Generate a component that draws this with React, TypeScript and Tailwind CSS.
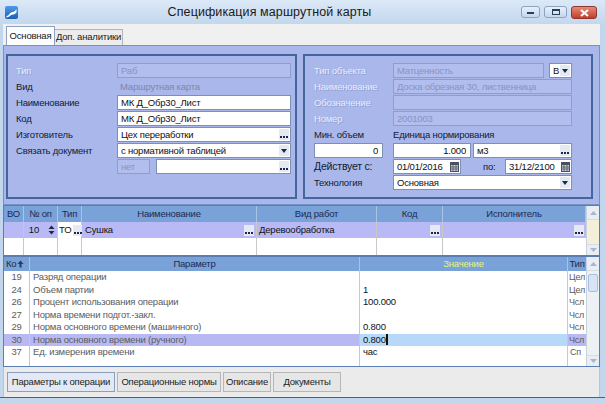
import React from "react";

function Dots() {
  return (
    <svg width="10" height="11" viewBox="0 0 10 11" className="shrink-0">
      <rect x="0" y="0" width="10" height="11" fill="#e6e9f2" />
      <rect x="1" y="7" width="2" height="2" fill="#1c2848" />
      <rect x="4" y="7" width="2" height="2" fill="#1c2848" />
      <rect x="7" y="7" width="2" height="2" fill="#1c2848" />
    </svg>
  );
}

function Drop() {
  return (
    <svg width="10" height="11" viewBox="0 0 10 11" className="shrink-0">
      <rect x="0" y="0" width="10" height="11" fill="#e6e9f2" />
      <path d="M2 4 L8 4 L5 8 Z" fill="#1c2848" />
    </svg>
  );
}

function Cal() {
  return (
    <svg width="9" height="10" viewBox="0 0 9 10" className="shrink-0">
      <rect x="0.5" y="0.5" width="8" height="9" fill="#c8ccd6" stroke="#4a5060" />
      <rect x="1" y="1" width="7" height="2" fill="#4a5060" />
      <path d="M1 5 H8 M1 7 H8 M3 3 V9 M6 3 V9" stroke="#4a5060" strokeWidth="0.8" />
    </svg>
  );
}

function Spin() {
  return (
    <svg width="7" height="10" viewBox="0 0 7 10" className="shrink-0">
      <path d="M3.5 0.5 L6.5 4 L0.5 4 Z" fill="#1c2848" />
      <path d="M3.5 9.5 L6.5 6 L0.5 6 Z" fill="#1c2848" />
    </svg>
  );
}

function Inp({
  cls,
  text = "",
  dis = false,
  right = false,
  btn,
}: {
  cls: string;
  text?: string;
  dis?: boolean;
  right?: boolean;
  btn?: "dots" | "drop" | "cal";
}) {
  const base = dis
    ? "bg-[#b2beee] border-[#8d9dcf] text-[#8793c2]"
    : "bg-white border-[#7d8fb6] text-[#101010]";
  return (
    <div className={`h-[15px] border ${base} flex items-center pl-[3px] pr-[1px] shrink-0 ${cls}`}>
      <span className={`flex-1 whitespace-nowrap overflow-hidden leading-[13px] ${right ? "text-right pr-[3px]" : ""}`}>
        {text}
      </span>
      {btn === "dots" && <Dots />}
      {btn === "drop" && <Drop />}
      {btn === "cal" && <Cal />}
    </div>
  );
}

function DisLabel({ children, cls }: { children: React.ReactNode; cls: string }) {
  return (
    <div className={`shrink-0 leading-[15px] text-[#e8ecfb] [text-shadow:1px_1px_0_#93a2d6] ${cls}`}>{children}</div>
  );
}

function Label({ children, cls }: { children: React.ReactNode; cls: string }) {
  return <div className={`shrink-0 leading-[15px] text-[#121a30] whitespace-nowrap ${cls}`}>{children}</div>;
}

function TitleBar() {
  return (
    <div className="h-[24px] shrink-0 flex items-center bg-gradient-to-b from-[#dce9f7] to-[#c3d7ee]">
      <div className="ml-[5px] w-[13px] h-[13px]">
        <svg width="13" height="13" viewBox="0 0 13 13">
          <defs>
            <linearGradient id="ig" x1="0" y1="0" x2="0" y2="1">
              <stop offset="0" stopColor="#4f9be8" />
              <stop offset="1" stopColor="#1c5fb4" />
            </linearGradient>
          </defs>
          <rect x="0" y="0" width="13" height="13" rx="2" fill="url(#ig)" />
          <path d="M1.5 10 C4 10 5 6 7.5 6 C9.5 6 10 5 11.5 3 L11.5 6.5 C10 8 9 8.5 7.5 8.5 C5.5 8.5 4.5 11.5 1.5 11.5 Z" fill="#ffffff" />
        </svg>
      </div>
      <div className="flex-1 text-center text-[12.5px] tracking-[0.1px] text-[#1a1a1a] leading-[24px]">Спецификация маршрутной карты</div>
      <div className="flex items-start gap-[4px] mr-[8px] mt-[2px] h-[14px]">
        <div className="w-[19px] h-[12px] rounded-[3px] border border-[#8aa3c3] bg-gradient-to-b from-[#e9f1fa] to-[#c5d7ec] flex items-end justify-center pb-[3px]">
          <div className="w-[7px] h-[2px] bg-[#2a3c58]" />
        </div>
        <div className="w-[23px] h-[12px] rounded-[3px] border border-[#8aa3c3] bg-gradient-to-b from-[#e9f1fa] to-[#c5d7ec] flex items-center justify-center">
          <div className="w-[8px] h-[6px] border border-[#2a3c58] border-t-2" />
        </div>
        <div className="w-[26px] h-[13px] rounded-[3px] border border-[#8a3a2e] bg-gradient-to-b from-[#e58a78] to-[#c23c28] flex items-center justify-center">
          <svg width="9" height="8" viewBox="0 0 9 8">
            <path d="M1 1 L8 7 M8 1 L1 7" stroke="#ffffff" strokeWidth="2" />
          </svg>
        </div>
      </div>
    </div>
  );
}

function TopTabs() {
  return (
    <div className="h-[21px] shrink-0 bg-[#f0f0f0] flex items-end pl-[3px] whitespace-nowrap">
      <div className="h-[19px] w-[49px] bg-[#fbfcfe] border border-b-0 border-[#8ea3c2] flex items-center justify-center text-[#1a1a1a]">
        Основная
      </div>
      <div className="h-[16px] w-[68px] bg-[#ececec] border border-b-0 border-l-0 border-[#b4b4b4] flex items-center justify-center text-[#1a1a1a]">
        Доп. аналитики
      </div>
    </div>
  );
}

function LeftGroup() {
  return (
    <div className="w-[291px] h-[145px] border-2 border-[#45669d] pt-[7px] pl-[8px] pr-[4px] flex flex-col">
      <div className="h-[16px] flex">
        <DisLabel cls="w-[101px]">Тип</DisLabel>
        <Inp cls="w-[174px]" dis text="Раб" />
      </div>
      <div className="h-[16px] flex">
        <Label cls="w-[104px]">Вид</Label>
        <div className="leading-[15px] text-[#7e88ae]">Маршрутная карта</div>
      </div>
      <div className="h-[16px] flex">
        <Label cls="w-[101px]">Наименование</Label>
        <Inp cls="w-[174px]" text="МК Д_Обр30_Лист" />
      </div>
      <div className="h-[16px] flex">
        <Label cls="w-[101px]">Код</Label>
        <Inp cls="w-[174px]" text="МК Д_Обр30_Лист" />
      </div>
      <div className="h-[16px] flex">
        <Label cls="w-[101px]">Изготовитель</Label>
        <Inp cls="w-[174px]" text="Цех переработки" btn="dots" />
      </div>
      <div className="h-[16px] flex">
        <Label cls="w-[101px]">Связать документ</Label>
        <Inp cls="w-[174px]" text="с нормативной таблицей" btn="drop" />
      </div>
      <div className="h-[16px] flex">
        <div className="w-[101px] shrink-0" />
        <Inp cls="w-[33px]" dis text="нет" />
        <div className="w-[6px] shrink-0" />
        <Inp cls="w-[135px]" btn="dots" />
      </div>
    </div>
  );
}

function RightGroup() {
  return (
    <div className="w-[290px] h-[145px] border-2 border-[#45669d] pt-[7px] pl-[9px] flex flex-col">
      <div className="h-[16px] flex">
        <DisLabel cls="w-[79px]">Тип объекта</DisLabel>
        <Inp cls="w-[151px]" dis text="Матценность" />
        <div className="w-[5px] shrink-0" />
        <div className="w-[23px] h-[15px] border border-[#7d8fb6] bg-white flex items-center pl-[3px] pr-[1px] text-[#101010] leading-[13px]">
          <span className="flex-1">B</span>
          <Drop />
        </div>
      </div>
      <div className="h-[16px] flex">
        <DisLabel cls="w-[79px]">Наименование</DisLabel>
        <Inp cls="w-[179px]" dis text="Доска обрезная 30, лиственница" />
      </div>
      <div className="h-[16px] flex">
        <DisLabel cls="w-[79px]">Обозначение</DisLabel>
        <Inp cls="w-[179px]" dis />
      </div>
      <div className="h-[16px] flex">
        <DisLabel cls="w-[79px]">Номер</DisLabel>
        <Inp cls="w-[179px]" dis text="2001003" />
      </div>
      <div className="h-[16px] flex">
        <Label cls="w-[79px]">Мин. объем</Label>
        <Label cls="">Единица нормирования</Label>
      </div>
      <div className="h-[16px] flex">
        <Inp cls="w-[69px]" right text="0" />
        <div className="w-[10px] shrink-0" />
        <Inp cls="w-[78px]" right text="1.000" />
        <div className="w-[2px] shrink-0" />
        <Inp cls="w-[99px]" text="м3" btn="dots" />
      </div>
      <div className="h-[16px] flex">
        <Label cls="w-[79px] text-[10.5px]">Действует с:</Label>
        <Inp cls="w-[68px]" text="01/01/2016" btn="cal" />
        <Label cls="w-[44px] pl-[22px]">по:</Label>
        <Inp cls="w-[67px]" text="31/12/2100" btn="cal" />
      </div>
      <div className="h-[16px] flex">
        <Label cls="w-[79px]">Технология</Label>
        <Inp cls="w-[179px]" text="Основная" btn="drop" />
      </div>
    </div>
  );
}

function MainPanel() {
  return (
    <div className="h-[160px] shrink-0 bg-[#a9b7eb] border border-[#7592c6] pt-[8px] pl-[2px] flex gap-[6px]">
      <LeftGroup />
      <RightGroup />
    </div>
  );
}

function ScrollBar({ track, thumb }: { track: string; thumb?: boolean }) {
  return (
    <div className="w-[13px] shrink-0 flex flex-col border-l border-[#c8d2de]">
      <div className="h-[14px] bg-[#e9eef5] flex items-center justify-center border-b border-[#d4dce6]">
        <svg width="7" height="4" viewBox="0 0 7 4">
          <path d="M0 4 L3.5 0 L7 4 Z" fill="#a7b6ca" />
        </svg>
      </div>
      <div className={`flex-1 ${track} flex flex-col`}>
        {thumb && <div className="h-[18px] mt-[3px] mx-[1px] rounded-[2px] bg-[#d6e4f5] border border-[#a9c0dc]" />}
      </div>
      <div className="h-[11px] bg-[#e9eef5] flex items-center justify-center border-t border-[#d4dce6]">
        <svg width="7" height="4" viewBox="0 0 7 4">
          <path d="M0 0 L3.5 4 L7 0 Z" fill="#a7b6ca" />
        </svg>
      </div>
    </div>
  );
}

const OPS_W = ["w-[20px]", "w-[34px]", "w-[24px]", "w-[175px]", "w-[120px]", "w-[66px]", "w-[143px]"];

function OpsGrid() {
  const heads = ["ВО", "№ оп", "Тип", "Наименование", "Вид работ", "Код", "Исполнитель"];
  return (
    <div className="h-[51px] shrink-0 border border-[#5b7db2] bg-white flex">
      <div className="flex flex-col w-[582px]">
        <div className="h-[16px] flex bg-[#79a2d8] text-[#1b2b52]">
          {heads.map((h, i) => (
            <div key={h} className={`${OPS_W[i]} shrink-0 h-full border-r border-[#a9c3e6] flex items-center justify-center leading-[16px] whitespace-nowrap`}>
              {h}
            </div>
          ))}
        </div>
        <div className="h-[16px] flex text-[#111]">
          <div className="w-[20px] shrink-0 bg-[#b9b9f6] border-r border-[#c8c8c8]" />
          <div className="w-[34px] shrink-0 bg-[#b9b9f6] border-r border-[#c8c8c8] flex items-center justify-end pr-[2px] gap-[9px]">
            <span>10</span>
            <Spin />
          </div>
          <div className="w-[24px] shrink-0 bg-white border-r border-[#c8c8c8] flex items-center pl-[1px] gap-[2px]">
            <span>ТО</span>
            <Dots />
          </div>
          <div className="w-[175px] shrink-0 bg-[#b9b9f6] border-r border-[#c8c8c8] flex items-center pl-[3px] pr-[2px]">
            <span className="flex-1">Сушка</span>
            <Dots />
          </div>
          <div className="w-[120px] shrink-0 bg-[#b9b9f6] border-r border-[#c8c8c8] flex items-center pl-[2px]">
            Деревообработка
          </div>
          <div className="w-[66px] shrink-0 bg-[#b9b9f6] border-r border-[#c8c8c8] flex items-center justify-end pr-[2px]">
            <Dots />
          </div>
          <div className="w-[143px] shrink-0 bg-[#b9b9f6] flex items-center justify-end pr-[2px]">
            <Dots />
          </div>
        </div>
        <div className="flex-1 flex">
          {OPS_W.map((w, i) => (
            <div key={i} className={`${w} shrink-0 h-full ${i < 6 ? "border-r border-[#c8c8c8]" : ""}`} />
          ))}
        </div>
      </div>
      <ScrollBar track="bg-[#f3efd9]" />
    </div>
  );
}

const ROWS: [string, string, string, string][] = [
  ["19", "Разряд операции", "", "Цел"],
  ["24", "Объем партии", "1", "Цел"],
  ["26", "Процент использования операции", "100.000", "Чсл"],
  ["27", "Норма времени подгот.-закл.", "", "Чсл"],
  ["29", "Норма основного времени (машинного)", "0.800", "Чсл"],
  ["30", "Норма основного времени (ручного)", "0.800", "Чсл"],
  ["37", "Ед. измерения времени", "час", "Сп"],
];

function ParamsGrid() {
  return (
    <div className="h-[111px] shrink-0 border border-[#5b7db2] bg-white flex">
      <div className="flex flex-col w-[582px]">
        <div className="h-[14px] flex bg-[#79a2d8] text-[#1b2b52] leading-[14px]">
          <div className="w-[26px] shrink-0 border-r border-[#a9c3e6] flex items-center pl-[2px] gap-[1px]">
            <span>Ко</span>
            <svg width="7" height="8" viewBox="0 0 7 8">
              <path d="M3.5 0.5 L6.5 4 L4.5 4 L4.5 7.5 L2.5 7.5 L2.5 4 L0.5 4 Z" fill="#2a3c62" />
            </svg>
          </div>
          <div className="w-[330px] shrink-0 border-r border-[#a9c3e6] text-center">Параметр</div>
          <div className="w-[208px] shrink-0 border-r border-[#a9c3e6] text-center text-[#e4f47c]">Значение</div>
          <div className="w-[18px] shrink-0 text-center">Тип</div>
        </div>
        <div className="flex-1 flex flex-col relative">
          {ROWS.map((r) => {
            const sel = r[0] === "30";
            return (
              <div key={r[0]} className="h-[12.5px] flex leading-[12.5px]">
                <div className={`w-[26px] shrink-0 border-r border-[#c8c8c8] text-center text-[#5c5c5c] ${sel ? "bg-[#b8b9f3]" : ""}`}>{r[0]}</div>
                <div className={`w-[330px] shrink-0 border-r border-[#c8c8c8] pl-[3px] text-[#5c5c5c] ${sel ? "bg-[#b8b9f3]" : ""}`}>{r[1]}</div>
                <div className={`w-[208px] shrink-0 border-r border-[#c8c8c8] pl-[3px] text-[#111] flex items-center ${sel ? "bg-[#b6d9f9]" : ""}`}>
                  <span>{r[2]}</span>
                  {sel && <span className="w-[2px] h-[11px] bg-[#111]" />}
                </div>
                <div className={`w-[18px] shrink-0 text-[9px] text-[#5c5c5c] ${r[3] === "Сп" ? "pl-[2px]" : "pl-[1px]"} ${sel ? "bg-[#b8b9f3]" : ""}`}>{r[3]}</div>
              </div>
            );
          })}
          <div className="flex-1 flex">
            <div className="w-[26px] shrink-0 border-r border-[#c8c8c8]" />
            <div className="w-[330px] shrink-0 border-r border-[#c8c8c8]" />
            <div className="w-[208px] shrink-0 border-r border-[#c8c8c8]" />
          </div>
        </div>
      </div>
      <ScrollBar track="bg-[#eef1f4]" thumb />
    </div>
  );
}

function BottomTabs() {
  return (
    <div className="h-[30px] shrink-0 bg-[#ebebeb] border-x border-[#b8c4d2] flex items-start pt-[5px] pl-[3px] gap-[2px] text-[9.5px] text-[#1c1c1c] whitespace-nowrap">
      <div className="h-[20px] w-[108px] bg-[#e2e9f4] border border-[#8b9fbd] flex items-center justify-center">Параметры к операции</div>
      <div className="h-[20px] w-[104px] bg-[#e6e6e6] border border-[#b6b6b6] flex items-center justify-center">Операционные нормы</div>
      <div className="h-[20px] w-[48px] bg-[#e6e6e6] border border-[#b6b6b6] flex items-center justify-center">Описание</div>
      <div className="h-[20px] w-[68px] bg-[#e6e6e6] border border-[#b6b6b6] flex items-center justify-center">Документы</div>
    </div>
  );
}

export default function App() {
  return (
    <div className="w-[605px] h-[403px] overflow-hidden bg-[#c2d6ed] flex flex-col font-['Liberation_Sans',Arial,sans-serif] text-[9.5px] tracking-[-0.2px] text-[#141c30]">
      <TitleBar />
      <div className="flex flex-col pl-[3px] pr-[5px] shrink-0">
        <TopTabs />
        <MainPanel />
        <OpsGrid />
        <ParamsGrid />
        <BottomTabs />
      </div>
      <div className="h-[1px] shrink-0 bg-[#3a688c]" />
      <div className="flex-1" />
    </div>
  );
}
